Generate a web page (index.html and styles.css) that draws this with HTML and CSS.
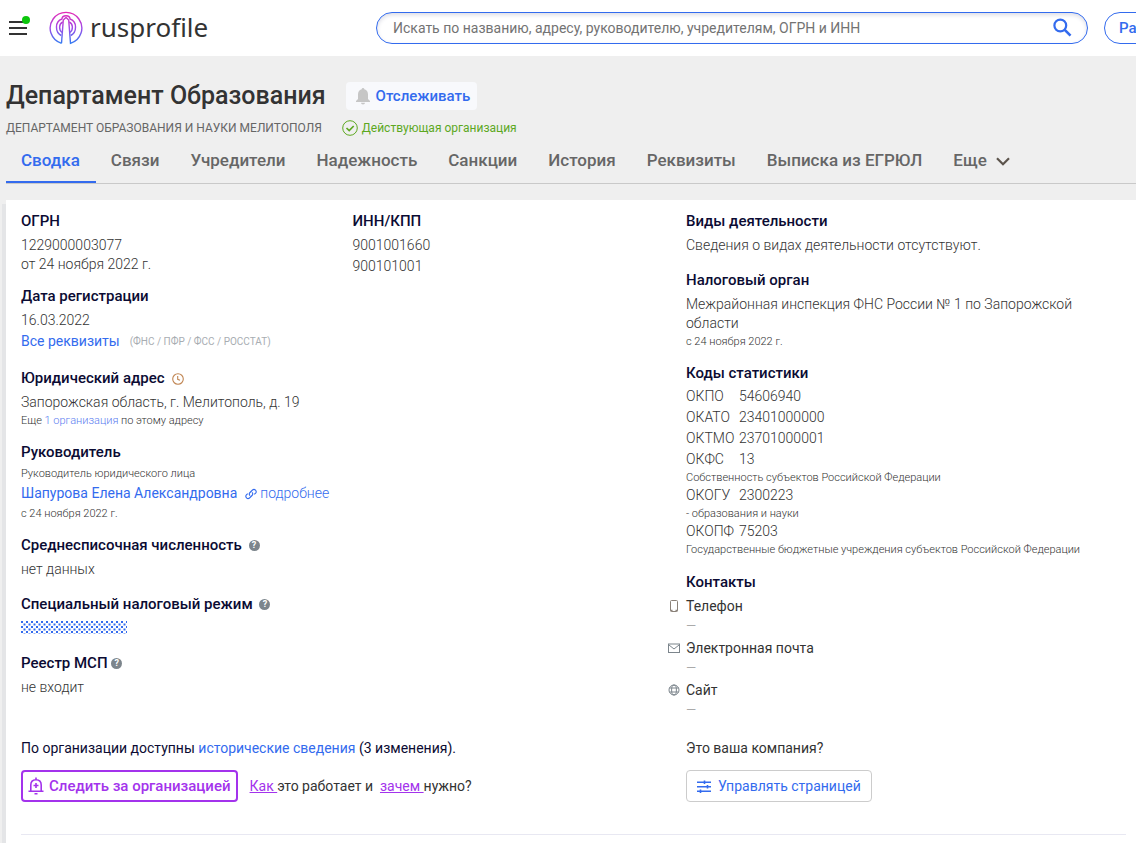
FILE: index.html
```html
<!DOCTYPE html>
<html lang="ru">
<head>
<meta charset="utf-8">
<title>Департамент Образования</title>
<link rel="stylesheet" href="styles.css">
</head>
<body>
<header class="topbar">
  <button class="burger" type="button" aria-label="Меню"><span class="burger-line"></span><span class="burger-line"></span><span class="burger-line"></span><span class="burger-dot"></span></button>
  <a class="logo" href="#">
    <svg width="34" height="34" viewBox="0 0 34 34" fill="none" stroke="url(#lg)" stroke-width="1.4">
      <defs><linearGradient id="lg" gradientUnits="userSpaceOnUse" x1="0" y1="1" x2="0" y2="33"><stop offset="0" stop-color="#e528b4"/><stop offset=".5" stop-color="#a04be8"/><stop offset="1" stop-color="#2f7df2"/></linearGradient></defs>
      <path d="M12.500 32.300A15.800 15.800 0 1 1 21.500 32.300L19.700 9"/>
      <path d="M12.500 32.300L14.300 9"/>
      <path d="M12.300 24.500C6 21.500 5.500 10.500 13 8C13 6 15 4.800 17 4.800S21 6 21 8C28.500 10.500 28 21.500 21.700 24.500"/>
      <path d="M13.700 11C9.700 13 9.700 19 13 21.500M20.300 11C24.300 13 24.300 19 21 21.500M14.300 9L17 6.500L19.700 9"/>
    </svg>
    <span class="logo-text">rusprofile</span>
  </a>
  <form class="search">
    <input class="search-input" type="text" aria-label="Поиск" placeholder="Искать по названию, адресу, руководителю, учредителям, ОГРН и ИНН">
    <button class="search-btn" type="button" aria-label="Найти"><svg width="20" height="20" viewBox="0 0 20 20" fill="none" stroke="#336bee" stroke-width="2.200"><circle cx="8.300" cy="7.500" r="5.900"/><path d="M12.500 11.700L18.500 17.700" stroke-width="2.600"/></svg></button>
  </form>
  <button class="advanced" type="button">Расширенный поиск</button>
</header>
<main class="page">
  <div class="title-row">
    <h1 class="title">Департамент Образования</h1>
    <button class="track" type="button"><svg width="16" height="18" viewBox="0 0 16 18" fill="#c6c6c6"><path d="M8 1a1.300 1.300 0 0 1 1.300 1.300C12 3 13 5 13 7.500V12l2 2v1H1v-1l2-2V7.500C3 5 4 3 6.700 2.300A1.300 1.300 0 0 1 8 1zM6 15.800h4a2 1.600 0 0 1-4 0z"/></svg>Отслеживать</button>
  </div>
  <div class="status-row">
    <span class="full-name">ДЕПАРТАМЕНТ ОБРАЗОВАНИЯ И НАУКИ МЕЛИТОПОЛЯ</span>
    <span class="status"><svg width="16" height="16" viewBox="0 0 16 16" fill="none" stroke="#5da81f"><circle cx="8" cy="8" r="7.300"/><path d="M4.500 8L7.200 10.500L11.700 6" stroke-width="1.700"/></svg>Действующая организация</span>
  </div>
  <nav class="tabs">
    <a class="tab tab-active" href="#">Сводка</a>
    <a class="tab" href="#">Связи</a>
    <a class="tab" href="#">Учредители</a>
    <a class="tab" href="#">Надежность</a>
    <a class="tab" href="#">Санкции</a>
    <a class="tab" href="#">История</a>
    <a class="tab" href="#">Реквизиты</a>
    <a class="tab" href="#">Выписка из ЕГРЮЛ</a>
    <a class="tab" href="#">Еще <svg class="chevron" width="14" height="9" viewBox="0 0 14 9" fill="none" stroke="#5c544c" stroke-width="2.200"><path d="M1 1.200L7 7.200L13 1.200"/></svg></a>
  </nav>
  <section class="card">
    <div class="columns">
      <div class="col-left">
        <div class="pair">
          <div>
            <h2 class="label">ОГРН</h2>
            <p class="value">1229000003077</p>
            <p class="value">от 24 ноября 2022 г.</p>
          </div>
          <div>
            <h2 class="label">ИНН/КПП</h2>
            <p class="value">9001001660</p>
            <p class="value value-next">900101001</p>
          </div>
        </div>
        <div class="block">
          <h2 class="label">Дата регистрации</h2>
          <p class="value">16.03.2022</p>
          <p class="value value-link"><a href="#">Все реквизиты</a><span class="hint">(ФНС / ПФР / ФСС / РОССТАТ)</span></p>
        </div>
        <div class="block block-small">
          <h2 class="label">Юридический адрес <svg class="clock" width="12" height="12" viewBox="0 0 12 12" fill="none" stroke="#c08552" stroke-width="1.100"><circle cx="6" cy="6" r="5.300"/><path d="M5.700 3v3.300L8 7.300"/></svg></h2>
          <p class="value">Запорожская область, г. Мелитополь, д. 19</p>
          <p class="small">Еще <a class="pale" href="#">1 организация</a> по этому адресу</p>
        </div>
        <div class="block block-small">
          <h2 class="label label-close">Руководитель</h2>
          <p class="small">Руководитель юридического лица</p>
          <p class="value value-link"><a href="#">Шапурова Елена Александровна</a><a class="more" href="#"><svg width="12" height="12" viewBox="0 0 12 12" fill="none" stroke="#336bee" stroke-width="1.100"><path d="M5 7.600A2.200 2.200 0 0 1 5 4.500L7.500 2A2.200 2.200 0 0 1 10.600 5.100L9.300 6.400M7 4.400A2.200 2.200 0 0 1 7 7.500L4.500 10A2.200 2.200 0 0 1 1.400 6.900L2.700 5.600"/></svg>подробнее</a></p>
          <p class="small">с 24 ноября 2022 г.</p>
        </div>
        <div class="block">
          <h2 class="label">Среднесписочная численность <span class="help">?</span></h2>
          <p class="value">нет данных</p>
        </div>
        <div class="block">
          <h2 class="label">Специальный налоговый режим <span class="help">?</span></h2>
          <p class="value value-hidden"><svg width="106" height="13"><defs><pattern id="dots" width="5" height="5" patternUnits="userSpaceOnUse"><path d="M0 0h2v2h-2zM2.500 2.500h2v2h-2z" fill="#336bee"/></pattern></defs><rect width="106" height="13" fill="url(#dots)"/></svg></p>
        </div>
        <div class="block">
          <h2 class="label label-narrow">Реестр МСП <span class="help">?</span></h2>
          <p class="value">не входит</p>
        </div>
      </div>
      <div class="col-right">
        <div class="block">
          <h2 class="label">Виды деятельности</h2>
          <p class="value">Сведения о видах деятельности отсутствуют.</p>
        </div>
        <div class="block block-small">
          <h2 class="label">Налоговый орган</h2>
          <p class="value value-office">Межрайонная инспекция ФНС России № 1 по Запорожской области</p>
          <p class="small">с 24 ноября 2022 г.</p>
        </div>
        <div class="block">
          <h2 class="label label-close">Коды статистики</h2>
          <p class="code"><span class="code-name">ОКПО</span>54606940</p>
          <p class="code"><span class="code-name">ОКАТО</span>23401000000</p>
          <p class="code"><span class="code-name">ОКТМО</span>23701000001</p>
          <p class="code"><span class="code-name">ОКФС</span>13</p>
          <p class="code-note">Собственность субъектов Российской Федерации</p>
          <p class="code"><span class="code-name">ОКОГУ</span>2300223</p>
          <p class="code-note">- образования и науки</p>
          <p class="code"><span class="code-name">ОКОПФ</span>75203</p>
          <p class="code-note">Государственные бюджетные учреждения субъектов Российской Федерации</p>
        </div>
        <div>
          <h2 class="label">Контакты</h2>
          <div class="contact"><svg class="contact-icon" width="12" height="14" viewBox="0 0 12 14" fill="none" stroke="#8a8178"><rect x="2.500" y="1.500" width="7" height="11" rx="1"/><path d="M2.500 11.500h2M7.500 11.500h2" stroke-width="1.500"/></svg><p>Телефон</p><p class="dash">—</p></div>
          <div class="contact"><svg class="contact-icon" width="12" height="14" viewBox="0 0 12 14" fill="none" stroke="#7c858c"><rect x=".5" y="3" width="11" height="8.500"/><path d="M1 4L6 8L11 4"/></svg><p>Электронная почта</p><p class="dash">—</p></div>
          <div class="contact"><svg class="contact-icon" width="12" height="14" viewBox="0 0 12 14" fill="none" stroke="#7c858c"><circle cx="6" cy="7" r="5"/><ellipse cx="6" cy="7" rx="2.400" ry="5"/><path d="M1.500 5h9M1.500 9h9"/></svg><p>Сайт</p><p class="dash">—</p></div>
        </div>
      </div>
    </div>
    <div class="columns columns-foot">
      <div class="col-left">
        <p class="history">По организации доступны <a href="#">исторические сведения</a> (3 изменения).</p>
        <div class="follow-row">
          <button class="follow" type="button"><svg width="16" height="18" viewBox="0 0 16 18" fill="none" stroke="#a333ec" stroke-width="1.600"><path d="M.5 14.200h15M2.800 14V8C2.800 4.500 5 2.700 8 2.700S13.200 4.500 13.200 8v6M8 .5v2M6.500 16.800h3M8 6v5M5.500 8.500h5"/></svg>Следить за организацией</button>
          <span class="follow-note"><a class="violet" href="#">Как </a>это работает и&nbsp; <a class="violet" href="#">зачем </a>нужно?</span>
        </div>
      </div>
      <div class="col-right">
        <p class="owner">Это ваша компания?</p>
        <button class="manage" type="button"><svg width="14" height="13" viewBox="0 0 14 13" stroke="#336bee" stroke-width="1.600"><path d="M0 2.200h14M0 6.700h14M0 11.200h14M7.500 .5v3.400M10.500 5v3.400M3.500 9.500v3.400"/></svg>Управлять страницей</button>
      </div>
    </div>
  </section>
</main>
</body>
</html>
```
FILE: styles.css
```css
* { box-sizing: border-box; }
body { margin: 0; background: #efefef; color: #333; font: 14px/19px Roboto, "Liberation Sans", sans-serif; overflow-x: hidden; }
h1, h2, p { margin: 0; }
a { color: #336bee; text-decoration: none; }
button { font: inherit; padding: 0; border: 0; background: none; cursor: pointer; }
svg { flex: none; }
.topbar { display: flex; align-items: center; height: 56px; padding-left: 9px; background: #fff; overflow: hidden; }
.burger { position: relative; display: flex; flex-direction: column; gap: 4px; width: 18px; flex: none; }
.burger-line { height: 2px; background: #333; }
.burger-dot { position: absolute; right: -3px; top: -5px; width: 8px; height: 8px; border-radius: 50%; background: #0bc60b; }
.logo { display: flex; align-items: center; gap: 7px; margin-left: 22px; flex: none; width: 327px; }
.logo-text { color: #333; font: 26px/34px "Noto Sans", sans-serif; padding-bottom: 2px; }
.search { display: flex; align-items: center; flex: none; width: 712px; height: 32px; padding: 0 15px 0 16px; border: 1px solid #336bee; border-radius: 16px; box-shadow: inset 0 2px 4px #dcdce4; }
.search-input { flex: 1; min-width: 0; border: 0; outline: 0; padding: 0; background: none; font: 14px/20px Roboto, sans-serif; color: #666; }
.search-input::placeholder { color: #737373; }
.search-btn { display: flex; }
.advanced { flex: none; height: 32px; margin-left: 16px; padding: 0 14px; border: 1px solid #336bee; border-radius: 16px; color: #336bee; font-size: 15px; font-weight: 500; }
.page { padding-left: 6px; }
.title-row { display: flex; align-items: center; gap: 20px; padding-top: 25px; }
.title { font-size: 25px; line-height: 30px; font-weight: 500; }
.track { display: flex; align-items: center; gap: 5px; height: 28px; padding: 0 7px 0 9px; border-radius: 4px; background: #f8f9fc; color: #336bee; font-size: 15px; font-weight: 500; }
.status-row { display: flex; align-items: center; gap: 20px; padding-top: 7px; line-height: 20px; }
.full-name { font-size: 12px; color: #666; }
.status { display: flex; align-items: center; gap: 4px; font-size: 12px; color: #5da81f; }
.tabs { display: flex; height: 46px; border-bottom: 1px solid #c9c9c9; white-space: nowrap; }
.tab { flex: none; height: 45px; padding: 11px 16px 0 15px; font-size: 17px; line-height: 22px; font-weight: 500; color: #666; }
.tab-active { color: #336bee; border-bottom: 2px solid #336bee; }
.chevron { margin-left: 5px; }
.card { margin-top: 16px; padding: 12px 10px 20px 15px; background: #fff; box-shadow: -4px 4px 0 #e4e5e7; }
.columns { display: grid; grid-template-columns: 3fr 2fr; }
.columns-foot { padding-top: 16px; padding-bottom: 32px; border-bottom: 1px solid #e8e8f2; }
.col-right { padding-left: 2px; }
.pair { display: grid; grid-template-columns: 1fr 1fr; margin-bottom: 11px; }
.block { margin-bottom: 16px; }
.block-small { margin-bottom: 14px; }
.label { margin-bottom: 5px; font-size: 15px; line-height: 19px; font-weight: 500; color: #0b0b33; }
.label-close { margin-bottom: 3px; }
.value, .code { font-size: 14px; font-weight: 300; }
.value-next { padding-top: 2px; }
.value-office { padding-right: 40px; }
.value-link { display: flex; align-items: center; line-height: 23px; font-weight: 400; }
.value-hidden { display: flex; align-items: center; height: 19px; padding-bottom: 2px; }
.hint { margin-left: 10px; font-size: 10px; color: #a8adb2; }
.small { font-size: 11px; line-height: 17px; font-weight: 300; }
.pale { color: #5b7df0; }
.more { display: flex; align-items: center; gap: 3px; margin-left: 8px; font-weight: 300; }
.clock { margin-left: 4px; vertical-align: -2px; }
.help { display: inline-block; width: 11px; height: 11px; margin-left: 3px; border-radius: 50%; background: #7c858c; color: #fff; font-size: 9px; line-height: 11px; font-weight: 700; text-align: center; vertical-align: 2px; }
.label-narrow .help { margin-left: 0; }
.code { display: flex; line-height: 21px; }
.code-name { width: 53px; flex: none; }
.code-note { font-size: 11px; line-height: 15px; font-weight: 300; }
.contact { position: relative; height: 42px; }
.contact-icon { position: absolute; left: -18px; top: 2px; }
.dash { color: #aaa; font-size: 13px; }
.history { color: #0b0b33; padding-bottom: 12px; }
.follow-row { display: flex; align-items: center; gap: 12px; }
.follow { display: flex; align-items: center; gap: 5px; height: 32px; padding: 0 5px; border: 2px solid #a333ec; border-radius: 4px; color: #a333ec; font-size: 15px; font-weight: 500; }
.violet { color: #a333ec; text-decoration: underline; }
.owner { padding-bottom: 12px; }
.manage { display: flex; align-items: center; gap: 7px; height: 32px; padding: 0 10px; border: 1px solid #ccc; border-radius: 4px; color: #336bee; }
```
